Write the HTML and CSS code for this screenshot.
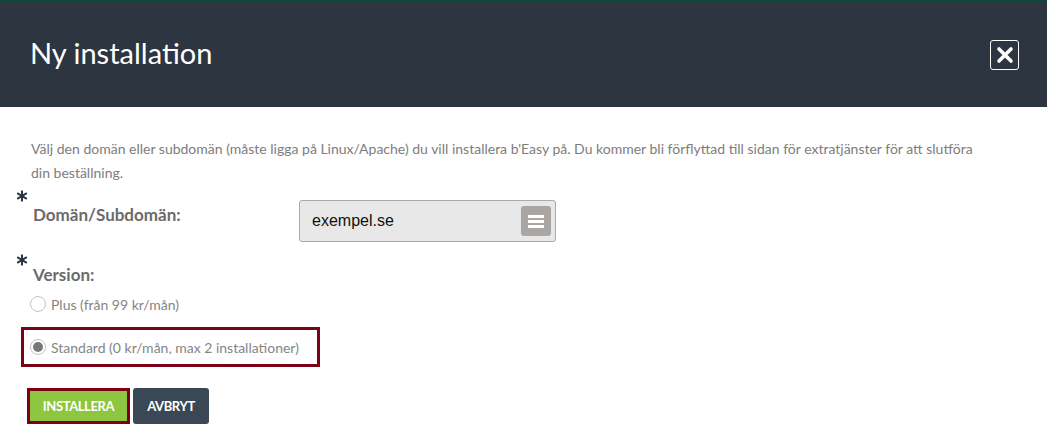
FILE: index.html
```html
<!DOCTYPE html>
<html lang="sv">
<head>
<meta charset="utf-8">
<title>Ny installation</title>
<link rel="stylesheet" href="styles.css">
</head>
<body>
<div class="modal">
  <header class="modal-head">
    <h1 class="modal-title">Ny installation</h1>
    <button class="close-btn" aria-label="Stäng">
      <svg width="20" height="20" viewBox="0 0 20 20"><path d="M4 4 L16 16 M16 4 L4 16" stroke="#fff" stroke-width="3.6" stroke-linecap="round"/></svg>
    </button>
  </header>
  <main class="modal-body">
    <p class="intro">Välj den domän eller subdomän (måste ligga på Linux/Apache) du vill installera b'Easy på. Du kommer bli förflyttad till sidan för extratjänster för att slutföra<br>din beställning.</p>
    <div class="field-row">
      <div class="label-wrap">
        <svg class="req" width="12" height="12" viewBox="0 0 12 12"><path d="M6 0.5 V11.5 M1.2 3.2 L10.8 8.8 M10.8 3.2 L1.2 8.8" stroke="#2d3640" stroke-width="2"/></svg>
        <label class="label">Domän/Subdomän:</label>
      </div>
      <div class="select">
        <span class="select-value">exempel.se</span>
        <span class="select-btn">
          <svg width="16" height="14" viewBox="0 0 16 14"><rect x="0" y="1" width="16" height="3" fill="#fff"/><rect x="0" y="6" width="16" height="3" fill="#fff"/><rect x="0" y="11" width="16" height="3" fill="#fff"/></svg>
        </span>
      </div>
    </div>
    <div class="version">
      <div class="label-wrap">
        <svg class="req" width="12" height="12" viewBox="0 0 12 12"><path d="M6 0.5 V11.5 M1.2 3.2 L10.8 8.8 M10.8 3.2 L1.2 8.8" stroke="#2d3640" stroke-width="2"/></svg>
        <label class="label">Version:</label>
      </div>
      <div class="radio-row plain">
        <span class="radio"></span>
        <span class="radio-text">Plus (från 99 kr/mån)</span>
      </div>
      <div class="radio-row highlight">
        <span class="radio checked"></span>
        <span class="radio-text">Standard (0 kr/mån, max 2 installationer)</span>
      </div>
    </div>
    <div class="actions">
      <span class="btn-frame"><button class="btn btn-green">INSTALLERA</button></span>
      <button class="btn btn-dark">AVBRYT</button>
    </div>
  </main>
</div>
</body>
</html>
```

FILE: styles.css
```css
* { box-sizing: border-box; }
html, body { margin: 0; padding: 0; background: #fff; }
body { font-family: Lato, "Open Sans", sans-serif; width: 1047px; height: 445px; overflow: hidden; }

.modal-head {
  height: 107px;
  background: #2d3640;
  border-top: 2px solid #0c4a38;
  display: flex;
  align-items: center;
  justify-content: space-between;
  padding: 0 28px 0 30px;
}
.modal-title {
  margin: 0 0 5px 0;
  color: #fff;
  font-weight: 400;
  font-size: 29px;
}
.close-btn {
  width: 29px;
  height: 30px;
  border: 1.5px solid #fff;
  border-radius: 3px;
  background: transparent;
  padding: 0;
  display: flex;
  align-items: center;
  justify-content: center;
}

.intro {
  margin: 30px 0 0 31px;
  width: 1010px;
  font-size: 14px;
  line-height: 24px;
  letter-spacing: 0;
  color: #7d7d7d;
}
.field-row {
  display: flex;
  align-items: flex-start;
  margin-top: 12px;
  height: 54px;
}
.label-wrap { position: relative; padding-left: 33px; }
.req {
  position: absolute;
  left: 16px;
  top: -7px;
}
.label {
  display: block;
  font-size: 17px;
  font-weight: 700;
  color: #6b6b6b;
  line-height: 18px;
}
.field-row .label-wrap { width: 299px; padding-top: 9px; }
.version .label-wrap .req { top: 3px; }
.select {
  width: 257px;
  height: 42px;
  margin-top: 3px;
  background: #e8e8e8;
  border: 1px solid #aaa;
  border-radius: 3px;
  display: flex;
  align-items: center;
  justify-content: space-between;
  padding: 0 4px 0 12px;
}
.select-value { font-family: "Liberation Sans", Arial, sans-serif; font-size: 16px; color: #111; }
.select-btn {
  width: 30px;
  height: 30px;
  background: #a9a6a4;
  border-radius: 3px;
  display: flex;
  align-items: center;
  justify-content: center;
}

.version .label-wrap { padding-top: 15px; }
.radio-row {
  display: flex;
  align-items: center;
  gap: 5px;
  font-size: 14px;
  color: #858585;
}
.plain { margin: 10px 0 0 30px; height: 20px; }
.highlight {
  margin: 13px 0 0 21px;
  width: 299px;
  height: 40px;
  border: 3px solid #7d0016;
  padding-left: 6px;
}
.radio {
  width: 16px;
  height: 16px;
  border-radius: 50%;
  border: 1px solid #c4c4c4;
  background: #fff;
  display: inline-flex;
  align-items: center;
  justify-content: center;
}
.radio.checked::after {
  content: "";
  width: 10px;
  height: 10px;
  border-radius: 50%;
  background: #777;
}

.actions {
  display: flex;
  align-items: center;
  gap: 3px;
  margin: 21px 0 0 27px;
}
.btn-frame {
  display: inline-flex;
  border: 3px solid #7d0016;
}
.btn {
  border: none;
  font-family: Lato, sans-serif;
  font-weight: 700;
  font-size: 13px;
  color: #fff;
  height: 30px;
  letter-spacing: -0.4px;
  cursor: pointer;
  padding: 0;
}
.btn-green { background: #8dc63f; width: 97px; }
.btn-dark { background: #3a4856; width: 76px; height: 36px; border-radius: 3px; }
```
